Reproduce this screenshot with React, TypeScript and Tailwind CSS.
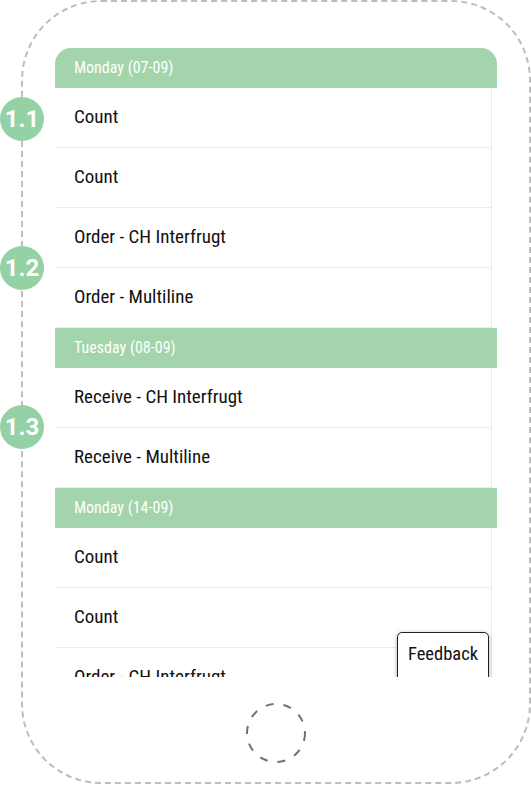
import React from 'react';

type Item = { kind: 'day'; label: string; first?: boolean } | { kind: 'row'; label: string };

const ITEMS: Item[] = [
  { kind: 'day', label: 'Monday (07-09)', first: true },
  { kind: 'row', label: 'Count' },
  { kind: 'row', label: 'Count' },
  { kind: 'row', label: 'Order - CH Interfrugt' },
  { kind: 'row', label: 'Order - Multiline' },
  { kind: 'day', label: 'Tuesday (08-09)' },
  { kind: 'row', label: 'Receive - CH Interfrugt' },
  { kind: 'row', label: 'Receive - Multiline' },
  { kind: 'day', label: 'Monday (14-09)' },
  { kind: 'row', label: 'Count' },
  { kind: 'row', label: 'Count' },
  { kind: 'row', label: 'Order - CH Interfrugt' },
];

const BADGES = [
  { label: '1.1', top: 'top-[97px]' },
  { label: '1.2', top: 'top-[246px]' },
  { label: '1.3', top: 'top-[405px]' },
];

export default function App() {
  return (
    <div className="relative h-[785px] w-[531px] overflow-hidden bg-white font-['Roboto',sans-serif] [font-stretch:condensed]">
      <div className="ml-[21px] flex h-[784px] w-[510px] flex-col items-center rounded-[80px] border-2 border-dashed border-[#bdbdbd] px-[32px] pt-[46px]">
        <div className="relative h-[629px] w-full overflow-hidden">
          {ITEMS.map((item, idx) =>
            item.kind === 'day' ? (
              <div
                key={idx}
                className={`flex h-[40px] items-center bg-[#a3d4ab] pl-[19px] text-[16px] text-white ${item.first ? 'rounded-t-[16px]' : ''}`}
              >
                {item.label}
              </div>
            ) : (
              <div
                key={idx}
                className="flex h-[60px] w-[437px] items-center border-r border-b border-[#ececec] pl-[19px] text-[19px] text-[#111]"
              >
                {item.label}
              </div>
            ),
          )}
          <button
            type="button"
            className="absolute right-[8px] top-[584px] h-[60px] w-[92px] rounded-t-[5px] border border-[#222] bg-white pb-[14px] text-[18.5px] text-[#111] shadow-[0_1px_4px_rgba(0,0,0,0.35)]"
          >
            Feedback
          </button>
        </div>
        <svg className="mt-[25px]" width="62" height="62" viewBox="0 0 62 62">
          <circle cx="31" cy="31" r="29" fill="none" stroke="#707070" strokeWidth="2" strokeDasharray="8 10" />
        </svg>
      </div>

      {BADGES.map((badge) => (
        <div
          key={badge.label}
          className={`absolute left-0 ${badge.top} flex h-[44px] w-[44px] items-center justify-center rounded-full bg-[#94d1a4] text-[24px] font-bold text-white [font-stretch:normal]`}
        >
          {badge.label}
        </div>
      ))}
    </div>
  );
}
